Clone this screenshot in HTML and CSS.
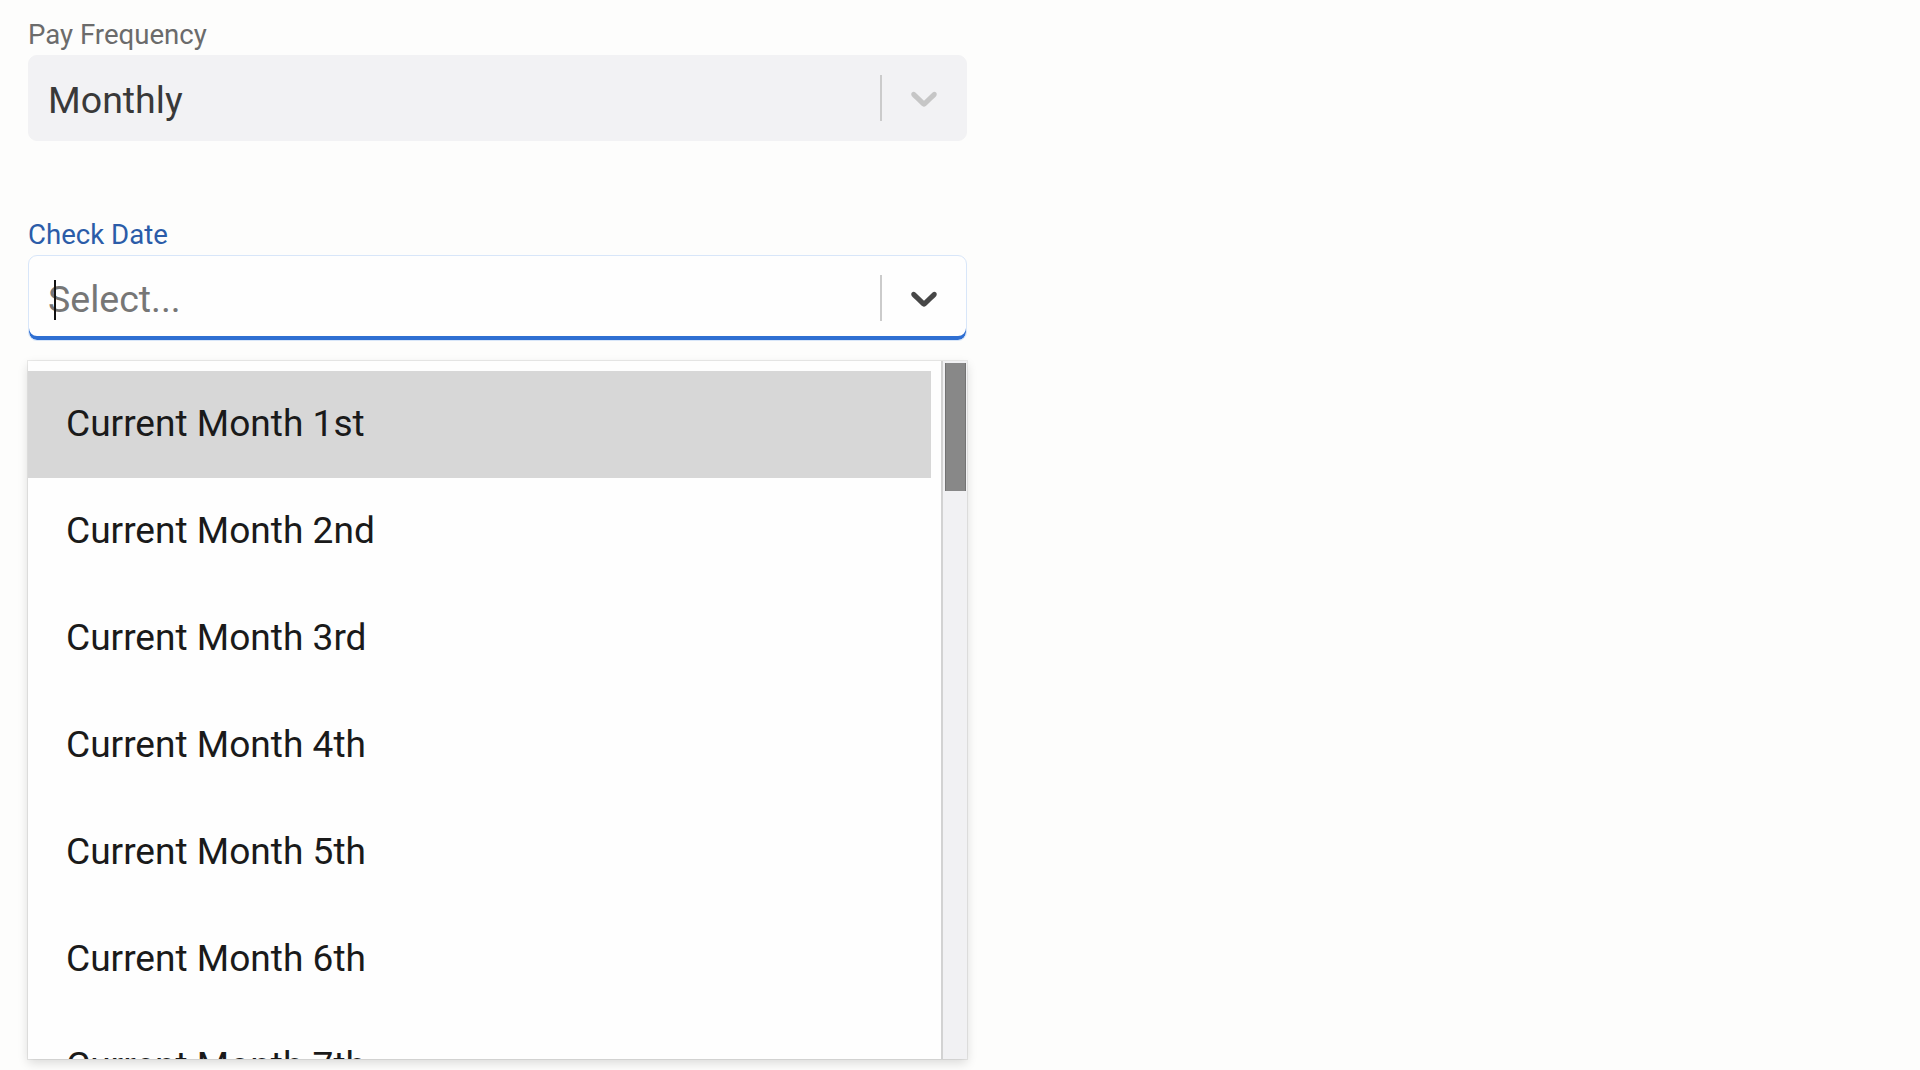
FILE: index.html
```html
<!DOCTYPE html>
<html lang="en">
<head>
<meta charset="utf-8">
<title>Payroll Schedule</title>
<link rel="stylesheet" href="styles.css">
</head>
<body>
<div class="page">
  <div class="field">
    <div class="label">Pay Frequency</div>
    <div class="control control-disabled">
      <div class="value value-set">Monthly</div>
      <div class="indicators">
        <span class="separator"></span>
        <span class="indicator">
          <svg class="chevron" viewBox="0 0 20 20" width="44" height="44" aria-hidden="true"><path d="M4.516 7.548c0.436-0.446 1.043-0.481 1.576 0l3.908 3.747 3.908-3.747c0.533-0.481 1.141-0.446 1.574 0 0.436 0.445 0.408 1.197 0 1.615-0.406 0.418-4.695 4.502-4.695 4.502-0.217 0.223-0.502 0.335-0.787 0.335s-0.57-0.112-0.789-0.335c0 0-4.287-4.084-4.695-4.502s-0.436-1.17 0-1.615z"/></svg>
        </span>
      </div>
    </div>
  </div>

  <div class="field field-second">
    <div class="label label-focus">Check Date</div>
    <div class="control control-focus">
      <div class="value value-placeholder">Select...<span class="caret"></span></div>
      <div class="indicators">
        <span class="separator"></span>
        <span class="indicator indicator-dark">
          <svg class="chevron" viewBox="0 0 20 20" width="44" height="44" aria-hidden="true"><path d="M4.516 7.548c0.436-0.446 1.043-0.481 1.576 0l3.908 3.747 3.908-3.747c0.533-0.481 1.141-0.446 1.574 0 0.436 0.445 0.408 1.197 0 1.615-0.406 0.418-4.695 4.502-4.695 4.502-0.217 0.223-0.502 0.335-0.787 0.335s-0.57-0.112-0.789-0.335c0 0-4.287-4.084-4.695-4.502s-0.436-1.17 0-1.615z"/></svg>
        </span>
      </div>
    </div>

    <div class="menu">
      <div class="menu-list">
        <div class="option option-focused">Current Month 1st</div>
        <div class="option">Current Month 2nd</div>
        <div class="option">Current Month 3rd</div>
        <div class="option">Current Month 4th</div>
        <div class="option">Current Month 5th</div>
        <div class="option">Current Month 6th</div>
        <div class="option">Current Month 7th</div>
        <div class="option">Current Month 8th</div>
        <div class="option">Current Month 9th</div>
        <div class="option">Current Month 10th</div>
        <div class="option">Current Month 11th</div>
        <div class="option">Current Month 12th</div>
        <div class="option">Current Month 13th</div>
        <div class="option">Current Month 14th</div>
        <div class="option">Current Month 15th</div>
        <div class="option">Current Month 16th</div>
        <div class="option">Current Month 17th</div>
        <div class="option">Current Month 18th</div>
        <div class="option">Current Month 19th</div>
        <div class="option">Current Month 20th</div>
        <div class="option">Current Month 21st</div>
        <div class="option">Current Month 22nd</div>
        <div class="option">Current Month 23rd</div>
        <div class="option">Current Month 24th</div>
        <div class="option">Current Month 25th</div>
        <div class="option">Current Month 26th</div>
        <div class="option">Current Month 27th</div>
        <div class="option">Current Month 28th</div>
        <div class="option">Current Month 29th</div>
        <div class="option">Current Month 30th</div>
        <div class="option">Current Month 31st</div>
        <div class="option">Current Month Last Day</div>
      </div>
      <div class="scrollbar">
        <div class="thumb"></div>
      </div>
    </div>
  </div>
</div>
</body>
</html>
```

FILE: styles.css
```css
html, body {
  margin: 0;
  padding: 0;
}

body {
  background: #fdfdfc;
  font-family: Roboto, "Liberation Sans", sans-serif;
  width: 1920px;
  height: 1070px;
  overflow: hidden;
}

.page {
  padding: 18px 0 0 28px;
  width: 939px;
}

.label {
  font-size: 27.6px;
  line-height: 32px;
  padding-top: 1px;
  color: #6b6b6b;
  margin-bottom: 4px;
}

.label-focus {
  color: #2b5ca8;
}

.field-second {
  margin-top: 77px;
}

.control {
  display: flex;
  height: 86px;
  box-sizing: border-box;
  border: 1px solid transparent;
  border-radius: 9px;
}

.control-disabled {
  background: #f2f2f4;
  border-color: #f2f2f4;
}

.control-focus {
  background: #fefefe;
  border-color: #d8e6f9;
  box-shadow: inset 0 -4px 0 #2f6fd2;
}

.value {
  position: relative;
  flex: 1;
  display: flex;
  align-items: center;
  padding-left: 19px;
  font-size: 37.5px;
  line-height: 44px;
}

.value-set {
  color: #393939;
  padding-top: 4px;
}

.value-placeholder {
  color: #767676;
  padding-top: 2px;
}

.caret {
  position: absolute;
  left: 25px;
  top: 24px;
  width: 2px;
  height: 40px;
  background: #111111;
}

.indicators {
  display: flex;
  align-items: stretch;
}

.separator {
  width: 2px;
  margin: 19px 0;
  background: #cbcbcb;
}

.indicator {
  display: flex;
  align-items: center;
  padding: 0 20px;
  color: #c6c6c6;
}

.indicator-dark {
  color: #474747;
}

.chevron {
  display: block;
  fill: currentColor;
}

.menu {
  margin-top: 20px;
  display: flex;
  height: 698px;
  background: #fefefe;
  box-shadow: 0 0 0 1px rgba(0, 0, 0, 0.07), 0 4px 10px rgba(0, 0, 0, 0.14);
}

.menu-list {
  width: 903px;
  padding: 10px 10px 0 0;
  overflow: hidden;
}

.option {
  height: 107px;
  line-height: 105px;
  padding-left: 38px;
  font-size: 37.1px;
  color: #1a1a1a;
  white-space: nowrap;
}

.option-focused {
  background: #d7d7d7;
}

.scrollbar {
  width: 24px;
  border-left: 2px solid #d2d2d2;
  background: #f1f1f3;
}

.thumb {
  margin: 2px 1px 0 2px;
  height: 128px;
  box-sizing: border-box;
  background: #888888;
  border-left: 1px solid #737373;
  border-right: 1px solid #737373;
}
```
